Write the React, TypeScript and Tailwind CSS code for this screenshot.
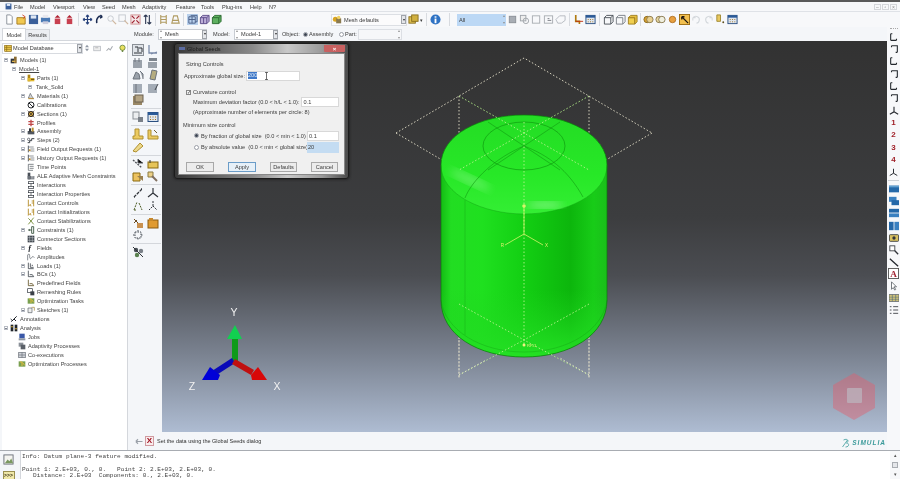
import React from "react";

const Y = "#d9a520", B = "#4a6fa5", G = "#6d7682", K = "#30343a", R = "#b8202a";
const glyphs: Record<string, React.ReactNode> = {
  doc: <path d="M3 1h4l2 2v8H3z" fill="#fff" stroke="#8a8f98" />,
  open: <><path d="M1 4h9v7H1z" fill="#f0c850" stroke="#a67c20" /><path d="M7 1l3 2-2 2" fill="none" stroke="#d04020" /></>,
  save: <><rect x="1" y="1" width="10" height="10" fill="#3a5f9a" /><rect x="3" y="1.5" width="6" height="3.5" fill="#dfe8f5" /></>,
  print: <><rect x="1" y="4" width="10" height="5" fill="#4a7ab5" /><rect x="3" y="1" width="6" height="3" fill="#e8e8ee" /><rect x="3" y="8" width="6" height="3" fill="#ccd" /></>,
  redu: <><path d="M6 1l3 3H3z" fill="#b02030" /><rect x="3" y="5" width="6" height="6" fill="#c84050" /></>,
  move: <path d="M6 1v10M1 6h10M6 1L4.5 3M6 1l1.5 2M6 11L4.5 9M6 11l1.5-2M1 6l2-1.5M1 6l2 1.5M11 6L9 4.5M11 6L9 7.5" stroke="#26407a" strokeWidth="1.3" fill="none" />,
  rot: <path d="M9 3C6 1 2 4 3 10M9 3L7 1M9 3L6.500 4.500" stroke="#1a2a50" strokeWidth="1.6" fill="none" />,
  zoom: <><circle cx="5" cy="5" r="3" fill="none" stroke="#c4c8ce" /><path d="M7 7l4 4" stroke="#d0b8a0" strokeWidth="1.4" /></>,
  zbox: <><rect x="1" y="1" width="7" height="7" fill="none" stroke="#c4c8ce" /><path d="M7 7l4 4" stroke="#d0b8a0" strokeWidth="1.4" /></>,
  fit: <><rect x="1" y="1" width="10" height="10" fill="#f4e8e8" stroke="#d09090" /><path d="M2 2l3 3M10 2L7 5M2 10l3-3M10 10L7 7" stroke="#a02030" strokeWidth="1.3" /></>,
  sort: <path d="M4 1v10M4 1L2 3M4 1l2 2M8 1v10M8 11L6 9M8 11l2-2" stroke="#2a3550" strokeWidth="1.2" fill="none" />,
  h1: <path d="M3 1v10M9 1v10M3 3h6M3 6h6M3 9h6" stroke="#b09a60" strokeWidth="1.2" fill="none" />,
  h2: <path d="M4 2h4l2 8H2zM3 7h6" stroke="#b09a60" strokeWidth="1.2" fill="none" />,
  gridsel: <><rect width="12" height="12" fill="#b8d0ec" /><path d="M2 3h7v7H2zM4 1.500h7v7H9M2 6h7M5.500 3v7" fill="none" stroke="#4a5f88" /></>,
  cube2: <><path d="M1.500 4L4 1.500h7V8L8.500 10.500h-7z" fill="#bcaed8" stroke="#5a4a88" /><path d="M1.500 4h7v6.500M8.500 4L11 1.500M5 4v6.500" fill="none" stroke="#5a4a88" /></>,
  cube3: <><path d="M1.500 4L4 1.500h7V8L8.500 10.500h-7z" fill="#5eb060" stroke="#2a6a30" /><path d="M1.500 4h7v6.500M8.500 4L11 1.500" fill="none" stroke="#2a6a30" /></>,
  mesh: <><circle cx="4" cy="5" r="3" fill="#d9a520" /><rect x="5" y="4" width="6" height="6" fill="#8a7a50" /><circle cx="8" cy="3" r="2" fill="#f0d060" /></>,
  cubes: <><rect x="1" y="3" width="7" height="7" fill="#e0c050" stroke="#8a7020" /><rect x="4" y="1" width="7" height="7" fill="#d0b040" stroke="#8a7020" /></>,
  info: <><circle cx="6" cy="6" r="5.500" fill="#2f73c4" /><rect x="5" y="5" width="2" height="5" fill="#fff" /><rect x="5" y="2.500" width="2" height="1.500" fill="#fff" /></>,
  gbox: <rect x="2.500" y="2.500" width="7" height="7" fill="#a8adb4" stroke="#8a8f96" />,
  gpair: <><rect x="1.500" y="1.500" width="6" height="6" fill="#eee" stroke="#a0a4aa" /><circle cx="7.500" cy="7.500" r="3" fill="none" stroke="#a0a4aa" /></>,
  gsq: <rect x="1.500" y="2" width="8" height="8" fill="none" stroke="#a8acb2" />,
  gsq2: <><rect x="1.500" y="2" width="9" height="8" fill="none" stroke="#a8acb2" /><path d="M5 5h2M5 7h4" stroke="#7a7e84" /></>,
  gtri: <path d="M1 6l4-4h6v5l-4 3H3z" fill="none" stroke="#b4b8be" />,
  axes: <><path d="M3 1v7h4v3" fill="none" stroke="#b07a10" strokeWidth="1.800" /><path d="M3 8h8" stroke="#c03010" strokeWidth="1" /></>,
  table: <><rect x="1" y="1.500" width="10" height="9" fill="#dfe6ee" stroke="#2a4f80" /><rect x="1" y="1.500" width="10" height="2.500" fill="#2a5a98" /><path d="M3 6h1M5.500 6h1M8 6h1M3 8.500h1M5.500 8.500h1M8 8.500h1" stroke="#a07020" /></>,
  boxa: <><path d="M1.500 4h7v7h-7zM1.500 4L4 1.500h7v7L8.500 11M8.500 4L11 1.500" fill="none" stroke="#4a5058" /></>,
  boxb: <><path d="M1.500 4h7v7h-7zM1.500 4L4 1.500h7v7L8.500 11" fill="none" stroke="#787e86" /></>,
  boxy: <><path d="M1.500 4h7v7h-7z" fill="#f0cf50" stroke="#a08020" /><path d="M1.500 4L4 1.500h7v7L8.500 11V4z" fill="#e8c040" stroke="#a08020" /></>,
  ring1: <><circle cx="4.500" cy="6" r="3.500" fill="#d8a030" stroke="#8a6a20" /><circle cx="7.500" cy="6" r="3.500" fill="#e8d090" stroke="#8a7a50" /></>,
  ring2: <><circle cx="4.500" cy="6" r="3.500" fill="#e8d8a0" stroke="#8a7a50" /><circle cx="7.500" cy="6" r="3.500" fill="#f0f0e0" stroke="#8a7a50" /></>,
  ball: <circle cx="6" cy="6" r="3.500" fill="#e8a040" stroke="#b07020" />,
  pick: <><rect x="0.500" y="0.500" width="11" height="11" fill="#f2c050" stroke="#9a6a10" /><path d="M3 3l7 7M3 3v3M3 3h3" stroke="#201810" strokeWidth="1.400" fill="none" /></>,
  undo: <path d="M2 4c3-3 8-1 7 3-.5 2-2 3-3 3M2 4v3M2 4h3" fill="none" stroke="#d4d8dc" strokeWidth="1.200" />,
  redo: <path d="M10 4C7 1 2 3 3 7c.5 2 2 3 3 3M10 4v3M10 4H7" fill="none" stroke="#d4d8dc" strokeWidth="1.200" />,
  yellowdots: <><path d="M2 1h4v7H2z" fill="#e8c860" stroke="#a08830" /><circle cx="9" cy="9" r="1" fill="#605020" /></>,
  dbcyl: <><rect x="1" y="2" width="10" height="9" fill="#f0cc50" stroke="#8a6a10" /><path d="M1 5h10M1 8h10M4 2v9" stroke="#8a6a10" /></>,
  up: <path d="M6 1L3 5h6zM6 11L3 7h6z" fill="#9098a4" />,
  filt: <><rect x="1" y="3" width="9" height="6" fill="#eee" stroke="#b4b8be" /><path d="M3 5h4" stroke="#aaa" /></>,
  flow: <path d="M2 9l3-3 2 2 3-5" stroke="#a4a8ae" strokeWidth="1.400" fill="none" />,
  bulb: <><circle cx="6" cy="5" r="3.500" fill="#e8e060" stroke="#5a7a30" /><rect x="5" y="8.500" width="2" height="2" fill="#5a7a30" /></>,
  models: <><rect x="1" y="4" width="5" height="7" fill={K} /><rect x="6" y="1" width="4" height="10" fill="#8a6a30" /><rect x="3" y="7" width="5" height="2" fill="#d8b050" /></>,
  parts: <><rect x="1" y="1" width="4" height="10" fill="#b08818" /><rect x="1" y="6" width="10" height="5" fill="#e0b830" /><rect x="6" y="7" width="5" height="2" fill="#7a5a10" /></>,
  mat: <><path d="M2 9l3-7 2 4 3 4z" fill="#d8d8d8" stroke="#5a6068" /><path d="M2 10h8" stroke="#c09030" strokeWidth="1.500" /></>,
  cal: <><circle cx="6" cy="6" r="4.500" fill="#fff" stroke="#25282c" strokeWidth="1.500" /><path d="M3 3l6 6" stroke="#25282c" strokeWidth="1.500" /></>,
  sec: <><circle cx="6" cy="6" r="4" fill="#c9a040" stroke="#3a3028" strokeWidth="1.500" /><path d="M1 1l10 10M11 1L1 11" stroke="#3a3028" /></>,
  prof: <path d="M6 1v10M2 4h8M2 8h8" stroke="#c04848" strokeWidth="2" fill="none" />,
  asm: <><rect x="1" y="6" width="10" height="5" fill="#50565e" /><rect x="3" y="2" width="3" height="5" fill="#30343a" /><rect x="7" y="1" width="3" height="6" fill="#b89030" /></>,
  steps: <><path d="M1 10h3V7h3V4h4" stroke="#3a4048" strokeWidth="1.500" fill="none" /><circle cx="2.500" cy="5" r="1.800" fill="none" stroke="#3a4048" /></>,
  fo: <><path d="M2 1v10" stroke="#5a6068" strokeWidth="1.500" /><path d="M2 3h8M5 6h6M5 9h6" stroke="#5a6068" /><circle cx="4" cy="8" r="1.500" fill="#c09030" /></>,
  time: <path d="M2 2h8M2 2v9h7M4 5h6M4 8h6" stroke="#4a5058" fill="none" />,
  ale: <><rect x="1" y="1" width="4" height="10" fill="#4a5058" /><rect x="1" y="6" width="10" height="5" fill="#6a7078" /><path d="M6 7h4M6 9h4" stroke="#ddd" /></>,
  inter: <><rect x="2" y="1" width="8" height="3" fill="#fff" stroke="#2a3038" /><rect x="2" y="8" width="8" height="3" fill="#fff" stroke="#2a3038" /><path d="M6 4v4" stroke="#2a3038" /></>,
  cc: <path d="M2 1v10l3-3 1 3M10 1v10M7 3h3M7 6h3" stroke="#b89030" strokeWidth="1.400" fill="none" />,
  cs: <path d="M2 2l4 4-4 5M10 1L6 6l4 5" stroke="#7a9040" strokeWidth="1.400" fill="none" />,
  con: <><path d="M7 1h3v10H7zM2 6h5" stroke="#35503a" strokeWidth="1.300" fill="none" /><path d="M2 6l2-2v4z" fill="#35503a" /></>,
  conn: <><rect x="1" y="1" width="10" height="10" fill="#40464e" /><path d="M1 4h10M1 8h10M4 1v10M8 1v10" stroke="#d4d8dc" strokeWidth="0.700" /></>,
  field: <text x="2" y="11" fontSize="12" fontStyle="italic" fontWeight="700" fontFamily="Liberation Serif" fill="#20242a">f</text>,
  amp: <path d="M1 11V3c2-3 3-1 3 2s1 5 3 2 2-2 4 0" fill="none" stroke="#5a6068" strokeWidth="1.100" />,
  load: <path d="M2 1v9h8M5 2v6h5M7 5h2" stroke="#3a4048" fill="none" strokeWidth="1.200" />,
  bc: <path d="M2 1v9h8l-2-3H4" stroke="#3a4048" fill="none" strokeWidth="1.200" />,
  pre: <path d="M2 1v9h8l-2-3H4" stroke="#6a5a30" fill="none" strokeWidth="1.300" />,
  rem: <><rect x="1" y="1" width="7" height="6" fill="#fff" stroke="#2a3038" /><rect x="5" y="5" width="6" height="6" fill="#3a4048" /></>,
  opt: <><rect x="1" y="2" width="10" height="8" fill="#7aa050" /><path d="M3 3h3v6M7 4l3 4" stroke="#e8c040" strokeWidth="1.400" fill="none" /></>,
  sketch: <><path d="M1.500 3h6v7h-6z" fill="#eee" stroke="#5a6068" /><path d="M7 2h4v5" stroke="#a08030" fill="none" /></>,
  ann: <path d="M2 10l4-4M6 6l4-4M6 6l3 3M1 6l2 2" stroke="#20242a" strokeWidth="1.500" fill="none" />,
  ana: <><rect x="1" y="1" width="4" height="10" fill="#20242a" /><rect x="7" y="1" width="4" height="10" fill="#20242a" /><rect x="2" y="3" width="2" height="2" fill="#e0b030" /><rect x="8" y="6" width="2" height="2" fill="#e0b030" /></>,
  job: <><rect x="2" y="1" width="8" height="7" fill="#3a58a8" /><rect x="1" y="8" width="10" height="3" fill="#9098a4" /></>,
  ada: <><rect x="1" y="1" width="7" height="6" fill="#8a9098" /><rect x="4" y="4" width="7" height="7" fill="#5a6068" /></>,
  coex: <><rect x="1" y="2" width="10" height="8" fill="#cfd3d8" stroke="#6a7078" /><path d="M6 2v8M1 6h10" stroke="#6a7078" /></>,
  t1: <><rect x="0.500" y="0.500" width="11" height="11" fill="#dfe3e8" stroke="#8a8f96" /><path d="M2 9h8M3 3h3v5M7 4h3v4" stroke="#30343a" fill="none" /></>,
  t2: <path d="M2 1v8h8M4 10l6-2" stroke="#7a8aa8" strokeWidth="1.300" fill="none" />,
  t3: <><rect x="1" y="3" width="9" height="8" fill="#9aa1aa" /><path d="M3 1v4M7 1v4" stroke="#6c737c" /></>,
  t4: <><rect x="1" y="5" width="9" height="6" fill="#9aa1aa" /><rect x="2" y="1" width="8" height="3" fill="#7d848d" /></>,
  t5: <path d="M1 10l3-7 3 2 1 5zM8 2l3 3v5" fill="#9aa1aa" stroke="#6c737c" />,
  t6: <path d="M5 1l5 1-2 9-5-1z" fill="#b4ac80" stroke="#6c737c" />,
  t7: <><rect x="1" y="2" width="9" height="9" fill="#a4acb6" /><path d="M4 2v9" stroke="#6c737c" /></>,
  t8: <><rect x="1" y="2" width="9" height="9" fill="#a4acb6" /><path d="M8 8l3-6" stroke="#40444a" /></>,
  t9: <><rect x="1" y="2" width="9" height="9" fill="#9a8866" /><rect x="3" y="1" width="8" height="7" fill="#b4a484" stroke="#6a6050" /></>,
  t10: <><rect x="1" y="1" width="6" height="7" fill="#eceef0" stroke="#8a8f96" /><rect x="6" y="6" width="5" height="5" fill="#7a8088" /></>,
  y1: <><path d="M3 1h4v7h4v3H1V8h2z" fill="#eccb62" stroke="#b09030" /></>,
  y2: <><path d="M1 2h3v6h7v3H1z" fill="#eccb62" stroke="#b09030" /><path d="M7 2l3 3" stroke="#706030" /></>,
  y3: <><path d="M1 10l7-8 3 3-7 6z" fill="#ecd88a" stroke="#b09030" /></>,
  m1: <><path d="M1 2l9 8" stroke="#50545a" strokeWidth="1.400" strokeDasharray="2 1" /><path d="M6 1v4h5" stroke="#50545a" /></>,
  m2: <><rect x="1" y="4" width="10" height="6" fill="#e6c458" stroke="#8a6a10" /><path d="M3 2v3" stroke="#30343a" /></>,
  m3: <><path d="M1 3h7v8H1z" fill="#ecc260" stroke="#8a6a10" /><path d="M5 6h6v5" fill="#9a8050" /></>,
  m4: <><path d="M1 2h5v5H1z" fill="#ecd088" stroke="#8a7a40" /><path d="M5 6l5 5" stroke="#807060" strokeWidth="2" /></>,
  d1: <path d="M2 10l8-8M2 10h1M10 2h-1" stroke="#30343a" strokeWidth="1.300" strokeDasharray="3 1" />,
  d2: <path d="M6 1v5L1 10M6 6l5 4" stroke="#30343a" strokeWidth="1.200" fill="none" />,
  d3: <path d="M2 10l3-8M7 3l3 7M2 10l2 0" stroke="#50602a" strokeDasharray="2 1" fill="none" />,
  d4: <path d="M6 1v5L2 10M6 6l4 4" stroke="#30343a" strokeDasharray="2 1" fill="none" />,
  e1: <><path d="M2 2l4 4M2 6l3-3" stroke="#6a4a20" /><rect x="5" y="6" width="6" height="5" fill="#c89050" /></>,
  e2: <><rect x="1" y="3" width="10" height="8" fill="#e09a30" stroke="#8a5a10" /><rect x="2" y="1" width="4" height="3" fill="#c8882a" /></>,
  e3: <path d="M3 3h6v6H3zM1 6h2M9 6h2M6 1v2M6 9v2" fill="none" stroke="#4a5058" strokeDasharray="1.500 1" />,
  e4: <><circle cx="4" cy="4" r="2.200" fill="#4a5058" /><circle cx="9" cy="5" r="2.200" fill="#7a8088" /><circle cx="5" cy="9" r="2.200" fill="#5a8050" /><path d="M1 1l10 10" stroke="#30343a" /></>,
  cs1: <path d="M2 2v8M2 2h2M2 10h7M9 10V8" stroke="#24282e" strokeWidth="1.300" fill="none" />,
  cs2: <path d="M3 2h7v8M10 10H8M3 2v2" stroke="#24282e" strokeWidth="1.300" fill="none" />,
  tri: <path d="M6 1v6L1 10M6 7l5 3" stroke="#24282e" strokeWidth="1.300" fill="none" />,
  tri2: <path d="M6 2v5L2 10M6 7l4 3" stroke="#5a6068" strokeWidth="1.200" fill="none" strokeDasharray="2 .7" />,
  bar1: <><rect x="0" y="2" width="12" height="8" fill="#2468a8" /><rect x="0" y="2" width="12" height="2" fill="#60a0d0" /></>,
  bar2: <><rect x="0" y="1" width="9" height="6" fill="#3a80c0" /><rect x="3" y="5" width="9" height="6" fill="#2468a8" /></>,
  bar3: <><rect x="0" y="1" width="12" height="4.500" fill="#2468a8" /><rect x="0" y="6.500" width="12" height="4.500" fill="#3a80c0" /></>,
  bar4: <><rect x="0" y="1" width="5.500" height="10" fill="#2468a8" /><rect x="6.500" y="1" width="5.500" height="10" fill="#3a80c0" /></>,
  cam: <><rect x="0.500" y="2" width="11" height="8" rx="1" fill="#d8c060" stroke="#30343a" /><circle cx="6" cy="6" r="2" fill="#30343a" /></>,
  zm: <><rect x="1" y="1" width="6" height="6" fill="#fff" stroke="#30343a" /><path d="M7 7l4 4" stroke="#30343a" strokeWidth="1.600" /></>,
  line: <path d="M1 2l10 9" stroke="#20242a" strokeWidth="1.500" />,
  tA: <><rect x="0.500" y="0.500" width="11" height="11" fill="#fff" stroke="#555" /><text x="6" y="10" textAnchor="middle" fontSize="10" fontWeight="700" fontFamily="Liberation Serif" fill="#a02030">A</text></>,
  arrow: <path d="M3 1v9l2-2 2 3 1-1-2-3h3z" fill="#fff" stroke="#5a6068" />,
  tb: <><rect x="0" y="2" width="12" height="8" fill="#d8c878" stroke="#5a6068" /><path d="M0 5h12M0 7.500h12M4 2v8M8 2v8" stroke="#3a5a7a" strokeWidth=".6" /></>,
  dash: <path d="M1 2h2M5 2h6M1 6h2M5 6h6M1 10h2M5 10h6" stroke="#30343a" />,
  prev: <path d="M1 6h9M1 6l3-3M1 6l3 3" stroke="#9aa0a8" strokeWidth="1.500" fill="none" />,
  msg: <><rect x="1" y="1" width="10" height="10" fill="#f4f4f0" stroke="#6a7078" /><path d="M2 10l3-4 2 2 2-3 2 5z" fill="#7a9860" /></>,
};

function Ic({ k, s = 11 }: { k: string; s?: number }) {
  return (
    <svg width={s} height={s} viewBox="0 0 12 12" className="block shrink-0">
      {glyphs[k]}
    </svg>
  );
}

function Cell({ k }: { k: string }) {
  return (
    <div className="w-[12px] h-full flex items-center justify-center shrink-0">
      <Ic k={k} s={11} />
    </div>
  );
}

function Sep({ w }: { w: string }) {
  return (
    <div className={`${w} h-full flex justify-center shrink-0 py-[1px]`}>
      <div className="w-px h-full bg-[#d8dbe0]" />
    </div>
  );
}

const menu: [string, string][] = [
  ["File", "w-[16px]"], ["Model", "w-[23px]"], ["Viewport", "w-[30px]"], ["View", "w-[19px]"],
  ["Seed", "w-[20px]"], ["Mesh", "w-[20px]"], ["Adaptivity", "w-[34px]"], ["Feature", "w-[25px]"],
  ["Tools", "w-[21px]"], ["Plug-ins", "w-[28px]"], ["Help", "w-[19px]"], ["N?", "w-[12px]"],
];

type Row = { t: string; lv: number; e?: boolean; i?: string; u?: boolean };
const tree: Row[] = [
  { t: "Models (1)", lv: 0, e: true, i: "models" },
  { t: "Model-1", lv: 1, e: true, u: true },
  { t: "Parts (1)", lv: 2, e: true, i: "parts" },
  { t: "Tank_Solid", lv: 4, e: true },
  { t: "Materials (1)", lv: 2, e: true, i: "mat" },
  { t: "Calibrations", lv: 2, i: "cal" },
  { t: "Sections (1)", lv: 2, e: true, i: "sec" },
  { t: "Profiles", lv: 2, i: "prof" },
  { t: "Assembly", lv: 2, e: true, i: "asm" },
  { t: "Steps (2)", lv: 2, e: true, i: "steps" },
  { t: "Field Output Requests (1)", lv: 2, e: true, i: "fo" },
  { t: "History Output Requests (1)", lv: 2, e: true, i: "fo" },
  { t: "Time Points", lv: 2, i: "time" },
  { t: "ALE Adaptive Mesh Constraints", lv: 2, i: "ale" },
  { t: "Interactions", lv: 2, i: "inter" },
  { t: "Interaction Properties", lv: 2, i: "inter" },
  { t: "Contact Controls", lv: 2, i: "cc" },
  { t: "Contact Initializations", lv: 2, i: "cc" },
  { t: "Contact Stabilizations", lv: 2, i: "cs" },
  { t: "Constraints (1)", lv: 2, e: true, i: "con" },
  { t: "Connector Sections", lv: 2, i: "conn" },
  { t: "Fields", lv: 2, e: true, i: "field" },
  { t: "Amplitudes", lv: 2, i: "amp" },
  { t: "Loads (1)", lv: 2, e: true, i: "load" },
  { t: "BCs (1)", lv: 2, e: true, i: "bc" },
  { t: "Predefined Fields", lv: 2, i: "pre" },
  { t: "Remeshing Rules", lv: 2, i: "rem" },
  { t: "Optimization Tasks", lv: 2, i: "opt" },
  { t: "Sketches (1)", lv: 2, e: true, i: "sketch" },
  { t: "Annotations", lv: 0, i: "ann" },
  { t: "Analysis", lv: 0, e: true, i: "ana" },
  { t: "Jobs", lv: 3, i: "job" },
  { t: "Adaptivity Processes", lv: 3, i: "ada" },
  { t: "Co-executions", lv: 3, i: "coex" },
  { t: "Optimization Processes", lv: 3, i: "opt" },
];
const pads = ["pl-[3px]", "pl-[11px]", "pl-[20px]", "pl-[11px]", "pl-[27px]"];

function Exp({ show }: { show: boolean }) {
  return (
    <div className="w-[5px] h-[5px] shrink-0 flex items-center justify-center">
      {show && (
        <div className="w-[4px] h-[4px] border border-[#b8bcc4] bg-white flex items-center justify-center">
          <div className="w-[2px] h-px bg-[#808590]" />
        </div>
      )}
    </div>
  );
}

function TreeRow({ r }: { r: Row }) {
  return (
    <div className={`flex items-center h-[8.94px] ${pads[r.lv]}`}>
      <Exp show={!!r.e} />
      {r.i ? (
        <div className="w-[11px] flex justify-center shrink-0"><Ic k={r.i} s={8} /></div>
      ) : r.lv === 1 ? (
        <div className="w-[2px]" />
      ) : (
        <div className="w-[3px]" />
      )}
      <span className={`ml-[1px] whitespace-nowrap ${r.u ? "underline" : ""}`}>{r.t}</span>
    </div>
  );
}

function Spin() {
  return (
    <div className="w-[4px] h-[9px] flex flex-col justify-between items-center shrink-0">
      <div className="w-0 h-0 border-x-[1.5px] border-x-transparent border-b-[2px] border-b-[#909090]" />
      <div className="w-0 h-0 border-x-[1.5px] border-x-transparent border-t-[2px] border-t-[#909090]" />
    </div>
  );
}

function Drop() {
  return (
    <div className="w-[5px] h-[9px] bg-[#e4e6ea] border border-[#a0a4aa] flex items-center justify-center shrink-0">
      <div className="w-0 h-0 border-x-[1.5px] border-x-transparent border-t-[2px] border-t-[#303030]" />
    </div>
  );
}

function Combo({ w, t, spin = false }: { w: string; t: string; spin?: boolean }) {
  return (
    <div className={`${w} h-[11px] flex items-center bg-white border-y border-l border-[#c8ccd2] shrink-0`}>
      {spin && <Spin />}
      <span className="flex-1 pl-[2px] whitespace-nowrap overflow-hidden">{t}</span>
      <Drop />
    </div>
  );
}

function Radio({ on = false }: { on?: boolean }) {
  return (
    <div className="w-[5px] h-[5px] rounded-full border border-[#9a9ea6] bg-white flex items-center justify-center shrink-0">
      {on && <div className="w-[3px] h-[3px] rounded-full bg-[#3a4250]" />}
    </div>
  );
}

function Btn({ t, w, focus = false }: { t: string; w: string; focus?: boolean }) {
  return (
    <div className={`${w} h-[10px] flex items-center justify-center border ${focus ? "border-[#6a9cc8] bg-[#e6f0f8]" : "border-[#a8a8a8] bg-[#ececec]"}`}>{t}</div>
  );
}

const rightIcons: [string, string][] = [
  ["cs1", "h-[12px]"], ["cs2", "h-[12px]"], ["cs1", "h-[12px]"], ["cs2", "h-[13px]"], ["cs1", "h-[12px]"], ["cs2", "h-[12px]"], ["tri", "h-[13px]"],
];

function Right() {
  const nums = ["1", "2", "3", "4"];
  const low = ["bar1", "bar2", "bar3", "bar4", "cam", "zm", "line", "tA", "arrow", "tb", "dash"];
  return (
    <div className="w-[13px] h-full bg-[#f7f8fa] flex flex-col items-center shrink-0">
      <div className="w-[8px] h-px mb-[2px] mt-px border-t border-dotted border-[#a8a8a8]" />
      {rightIcons.map(([k, h], i) => (
        <div key={i} className={`${h} flex items-center justify-center`}><Ic k={k} s={10} /></div>
      ))}
      {nums.map((n) => (
        <div key={n} className="h-[12.3px] flex items-center justify-center text-[8px] leading-none font-bold text-[#a02028]">{n}</div>
      ))}
      <div className="h-[12px] flex items-center"><Ic k="tri" s={9} /></div>
      <div className="w-[11px] h-px bg-[#ccd0d6] my-[2px]" />
      {low.map((k, i) => (
        <div key={i} className="h-[12.100px] flex items-center justify-center"><Ic k={k} s={k === "tA" ? 11 : 10} /></div>
      ))}
    </div>
  );
}

function Tool({ a, b }: { a: string; b?: string }) {
  return (
    <div className="flex gap-[3px] pl-[2px] h-[12.500px] items-center">
      <Ic k={a} s={12} />
      {b ? <Ic k={b} s={12} /> : <div className="w-[12px]" />}
    </div>
  );
}
function ToolSep() {
  return <div className="h-px bg-[#d4d7dc] mx-[1px] my-[1.750px]" />;
}

function Scene() {
  const dash = "M396 133 L524 58 L652 133 M396 133 L459 170 M652 133 L589 170 M459 96 V378 M589 96 V378";
  const dashOn = "M524 122 V345 M459 96 L524 133 L589 170 M589 96 L524 133 L459 170 M459 304 L524 340 L589 375 M589 304 L524 340 L459 375";
  return (
    <svg className="absolute inset-0 w-full h-full" viewBox="162 41 725 391">
      <defs>
        <linearGradient id="body" x1="0" x2="1" y1="0" y2="0">
          <stop offset="0" stopColor="#14bc14" />
          <stop offset="0.06" stopColor="#22dd22" />
          <stop offset="0.25" stopColor="#1fe01f" />
          <stop offset="0.5" stopColor="#13cf13" />
          <stop offset="0.78" stopColor="#0cb60c" />
          <stop offset="0.92" stopColor="#18cc18" />
          <stop offset="1" stopColor="#1abf1a" />
        </linearGradient>
        <linearGradient id="dome" x1="0" x2="0" y1="0" y2="1">
          <stop offset="0" stopColor="#24dc24" />
          <stop offset="0.6" stopColor="#27e827" />
          <stop offset="1" stopColor="#34ee34" />
        </linearGradient>
        <linearGradient id="bottom" x1="0" x2="0" y1="0" y2="1">
          <stop offset="0" stopColor="#1ed41e" stopOpacity="0" />
          <stop offset="1" stopColor="#24e024" />
        </linearGradient>
        <filter id="soft"><feGaussianBlur stdDeviation="4" /></filter>
      </defs>
      <path d={dash} fill="none" stroke="#e6e2cc" strokeWidth="0.900" strokeDasharray="1.500 2" />
      <path d="M441 165 C441 135 480 115 524 115 C568 115 607 135 607 165 L607 300 C607 335 570 357 524 357 C478 357 441 335 441 300 Z" fill="url(#body)" />
      <path d="M441 290 H607 V300 C607 335 570 357 524 357 C478 357 441 335 441 300 Z" fill="url(#bottom)" />
      <path d="M441 165 C441 135 480 115 524 115 C568 115 607 135 607 165 C607 195 565 214 524 214 C483 214 441 195 441 165 Z" fill="url(#dome)" />
      <path d="M441 165 C441 195 483 214 524 214 C565 214 607 195 607 165" fill="none" stroke="#12a812" strokeWidth="0.500" />
      <ellipse cx="470" cy="180" rx="22" ry="5" fill="#8cf88c" opacity="0.500" filter="url(#soft)" transform="rotate(25 470 180)" />
      <ellipse cx="545" cy="205" rx="18" ry="3" fill="#a8faa8" opacity="0.700" filter="url(#soft)" />
      <ellipse cx="524" cy="146" rx="41" ry="24" fill="none" stroke="#109c10" strokeWidth="0.700" />
      <path d="M465 198 C472 180 495 158 524 146 C548 155 568 170 583 197 M488 122 L560 170 M560 122 L488 170" fill="none" stroke="#109c10" strokeWidth="0.600" />
      <path d="M465 200 V335 M441 300 C445 330 480 352 524 352 C568 352 603 330 607 300" fill="none" stroke="#109c10" strokeWidth="0.500" opacity="0.700" />
      <path d="M441 165 C441 135 480 115 524 115 C568 115 607 135 607 165 L607 300 C607 335 570 357 524 357 C478 357 441 335 441 300 Z" fill="none" stroke="#0c7a0c" strokeWidth="0.700" />
      <path d={dashOn} fill="none" stroke="#b6f28a" strokeWidth="0.900" strokeDasharray="1.500 2" />
      <path d="M459 340 V378 M589 340 V378 M459 375 L486 360 M589 375 L560 358" fill="none" stroke="#e6e2cc" strokeWidth="0.900" strokeDasharray="1.500 2" />
      <path d="M524 206 V234 L505 245 M524 234 L543 245" fill="none" stroke="#d6f56a" strokeWidth="0.800" />
      <circle cx="524" cy="206" r="1.800" fill="#d6f56a" />
      <circle cx="524" cy="345" r="1.500" fill="#f0f080" />
      <text x="504" y="247" fontSize="4.500" fill="#e0f070" textAnchor="end" fontFamily="Liberation Sans">R</text>
      <text x="545" y="247" fontSize="4.500" fill="#e0f070" fontFamily="Liberation Sans">X</text>
      <text x="527" y="347" fontSize="4" fill="#e8f080" fontFamily="Liberation Sans">RP-1</text>
      {/* triad */}
      <path d="M232 362 V338 H238 V362 Z" fill="#0f9a1a" />
      <path d="M235 325 L242 339 H227 Z" fill="#12d050" />
      <path d="M232 358 L212 371 L215 376 L235 363 Z" fill="#0a0ab8" />
      <path d="M202 380 L210 367 L220 375 L218 380 Z" fill="#0000d8" />
      <path d="M235 359 L254 370 L251 375 L232 364 Z" fill="#c01010" />
      <path d="M267 380 L258 367 L251 375 L252 380 Z" fill="#d80808" />
      <text x="234" y="316" fontSize="10.500" textAnchor="middle" fill="#f2f2f2" fontFamily="Liberation Sans">Y</text>
      <text x="192" y="390" fontSize="10.500" textAnchor="middle" fill="#f2f2f2" fontFamily="Liberation Sans">Z</text>
      <text x="277" y="390" fontSize="10.500" textAnchor="middle" fill="#f2f2f2" fontFamily="Liberation Sans">X</text>
      {/* watermark */}
      <path d="M854 373 L875 385 V408 L854 420 L833 408 V385 Z" fill="#e0606e" opacity="0.450" />
      <rect x="847" y="388" width="15" height="15" rx="1" fill="#bcb0ba" opacity="0.800" />
    </svg>
  );
}

function Dialog() {
  return (
    <div className="absolute left-[12px] top-[2px] w-[175px] h-[136px] rounded-[3px] flex flex-col bg-[linear-gradient(90deg,#3a3a3a,#8a8a8a_45%,#c8c8c8_65%,#9a9a9a_85%,#4a4a4a)] px-[3px] pb-[3px] shadow-[0_0_3px_#111] border border-[#1c1c1c] text-[#3c3c3c]">
      <div className="h-[9px] flex items-center justify-between shrink-0">
        <div className="flex items-center gap-[2px] pl-[1px]">
          <div className="w-[6px] h-[3px] bg-[#5a6aa0]" />
          <span className="text-[#1c1c1c]">Global Seeds</span>
        </div>
        <div className="w-[21px] h-[7px] bg-[#c86060] rounded-b-[1px] flex items-center justify-center text-white text-[6px] leading-none font-bold">×</div>
      </div>
      <div className="flex-1 bg-[#f0f0f0] flex flex-col pl-[4px] pr-[5px] pt-[5px] border border-[#888]">
        <div className="h-[9px] pl-[3px] flex items-center">Sizing Controls</div>
        <div className="h-[13px] mt-[1px] flex items-center">
          <span className="w-[63px] pl-[1px] whitespace-nowrap">Approximate global size:</span>
          <div className="w-[54px] h-[10px] bg-white border border-[#d8d8d8] flex items-center pl-[1px] relative">
            <span className="bg-[#3f78c8] text-[#dde8f4] leading-[7px]">200</span>
            <svg width="5" height="8" viewBox="0 0 5 8" className="absolute left-[17px] top-0"><path d="M1 .5h3M2.500.5v7M1 7.500h3" stroke="#333" strokeWidth=".7" /></svg>
          </div>
        </div>
        <div className="h-[10px] mt-[5px] flex items-center gap-[2px] pl-[3px]">
          <div className="w-[5px] h-[5px] border border-[#888] bg-[#f8f8f8] flex items-center justify-center text-[5px] leading-none text-[#333]">✓</div>
          <span>Curvature control</span>
        </div>
        <div className="h-[10px] flex items-center pl-[10px]">
          <span className="w-[110px] whitespace-nowrap">Maximum deviation factor (0.0 &lt; h/L &lt; 1.0):</span>
          <div className="w-[38px] h-[10px] bg-white border border-[#d8d8d8] pl-[1px] flex items-center">0.1</div>
        </div>
        <div className="h-[9px] flex items-center pl-[10px] whitespace-nowrap">(Approximate number of elements per circle: 8)</div>
        <div className="h-[9px] mt-[4px] flex items-center whitespace-nowrap">Minimum size control</div>
        <div className="h-[11px] mt-[1px] flex items-center pl-[11px]">
          <Radio on />
          <span className="w-[108px] pl-[2px] whitespace-nowrap">By fraction of global size &nbsp;(0.0 &lt; min &lt; 1.0)</span>
          <div className="w-[32px] h-[10px] bg-white border border-[#d8d8d8] pl-[1px] flex items-center">0.1</div>
        </div>
        <div className="h-[12px] flex items-center pl-[11px]">
          <Radio />
          <span className="w-[108px] pl-[2px] whitespace-nowrap">By absolute value &nbsp;(0.0 &lt; min &lt; global size)</span>
          <div className="w-[32px] h-[11px] bg-[#c4dcf2] pl-[1px] flex items-center">20</div>
        </div>
        <div className="mt-[9px] flex justify-between pl-[3px] pr-[1px]">
          <Btn t="OK" w="w-[28px]" />
          <Btn t="Apply" w="w-[28px]" focus />
          <Btn t="Defaults" w="w-[27px]" />
          <Btn t="Cancel" w="w-[27px]" />
        </div>
      </div>
    </div>
  );
}

const tools: (string[] | string)[] = [
  ["t1", "t2"], ["t3", "t4"], ["t5", "t6"], ["t7", "t8"], ["t9"], "s",
  ["t10", "table"], "s", ["y1", "y2"], ["y3"], "s", ["m1", "m2"], ["m3", "m4"], "s",
  ["d1", "d2"], ["d3", "d4"], "s2", ["e1", "e2"], ["e3"], "s", ["e4"],
];

export default function App() {
  return (
    <div className="w-[900px] h-[479px] overflow-hidden flex flex-col bg-[#f4f6f9] text-[#3a3a3a] text-[5.6px] leading-[8px] font-['Liberation_Sans',sans-serif] blur-[0.4px]">
      <div className="h-[2px] bg-[#5a5a5a] shrink-0" />
      <div className="h-[10px] flex items-center shrink-0 border-b border-[#dfe2e7] bg-[#f7f8fa]">
        <div className="w-[14px] flex justify-center pl-[2px]"><Ic k="save" s={7} /></div>
        {menu.map(([t, w]) => (
          <span key={t} className={`${w} whitespace-nowrap`}>{t}</span>
        ))}
        <div className="ml-auto flex gap-[1px] pr-[3px]">
          {["–", "▫", "×"].map((c) => (
            <div key={c} className="w-[7px] h-[6px] border border-[#d4d6da] text-[5px] leading-[4px] text-center text-[#8a8a8a]">{c}</div>
          ))}
        </div>
      </div>
      <div className="h-[15px] flex items-center shrink-0 pl-[3px] bg-[#f7f8fa]">
        {["doc", "open", "save", "print", "redu", "redu"].map((k, i) => <Cell key={i} k={k} />)}
        <Sep w="w-[6px]" />
        {["move", "rot", "zoom", "zbox", "fit", "sort"].map((k, i) => <Cell key={i} k={k} />)}
        <Sep w="w-[4px]" />
        {["h1", "h2"].map((k, i) => <Cell key={i} k={k} />)}
        <Sep w="w-[5px]" />
        {["gridsel", "cube2", "cube3"].map((k, i) => <Cell key={i} k={k} />)}
        <div className="w-[109px] shrink-0" />
        <div className="w-[76px] h-[12px] flex items-center bg-[#fbfbfc] border border-[#dcdfe4] shrink-0">
          <Ic k="mesh" s={10} />
          <span className="flex-1 pl-[2px]">Mesh defaults</span>
          <Drop />
        </div>
        <Cell k="cubes" />
        <div className="w-[5px] text-[5px] text-center">▾</div>
        <Sep w="w-[5px]" />
        <Cell k="info" />
        <Sep w="w-[16px]" />
        <div className="w-[49px] h-[12px] flex items-center bg-[#bcd8f5] shrink-0">
          <span className="flex-1 pl-[2px]">All</span>
          <Spin />
        </div>
        {["gbox", "gpair", "gsq", "gsq2", "gtri"].map((k, i) => <Cell key={i} k={k} />)}
        <Sep w="w-[6px]" />
        {["axes", "table"].map((k, i) => <Cell key={i} k={k} />)}
        <Sep w="w-[6px]" />
        {["boxa", "boxb", "boxy"].map((k, i) => <Cell key={i} k={k} />)}
        <Sep w="w-[4px]" />
        {["ring1", "ring2", "ball", "pick", "undo", "redo", "yellowdots", "table"].map((k, i) => <Cell key={i} k={k} />)}
      </div>

      <div className="flex-1 flex min-h-0">
        <div className="w-[130px] shrink-0 flex flex-col">
          <div className="h-[14px] flex items-end pl-[2px] shrink-0 border-b border-[#d4d7dc]">
            <div className="w-[24px] h-[12px] bg-white border border-b-0 border-[#d4d7dc] flex items-center justify-center">Model</div>
            <div className="w-[24px] h-[11px] bg-[#eceef2] border border-b-0 border-l-0 border-[#d4d7dc] flex items-center justify-center">Results</div>
          </div>
          <div className="flex-1 bg-white border-r border-[#d4d7dc] mr-[2px] ml-[2px] flex flex-col">
            <div className="h-[14.500px] flex items-center shrink-0">
              <div className="w-[81px] h-[11px] flex items-center border border-[#d8dbe0] pl-[1px]">
                <Ic k="dbcyl" s={8} />
                <span className="flex-1 pl-[1px]">Model Database</span>
                <Drop />
              </div>
              <Ic k="up" s={8} />
              <div className="ml-[2px]"><Ic k="filt" s={9} /></div>
              <div className="ml-[3px]"><Ic k="flow" s={9} /></div>
              <div className="ml-[4px]"><Ic k="bulb" s={9} /></div>
            </div>
            <div className="-ml-[2px] text-[#444]">
              {tree.map((r) => <TreeRow key={r.t} r={r} />)}
            </div>
          </div>
        </div>

        <div className="flex-1 min-w-0 flex flex-col">
          <div className="h-[14px] flex items-center shrink-0 pl-[4px]">
            <span className="w-[24px]">Module:</span>
            <Combo w="w-[49px]" t="Mesh" spin />
            <span className="w-[21px] ml-[6px]">Model:</span>
            <Combo w="w-[44px]" t="Model-1" spin />
            <span className="w-[21px] ml-[4px]">Object:</span>
            <Radio on />
            <span className="ml-[1px] w-[30px]">Assembly</span>
            <Radio />
            <span className="ml-[1px] w-[13px]">Part:</span>
            <div className="w-[44px] h-[11px] border border-[#dcdfe4] bg-[#f6f7f9] flex justify-end items-center"><Spin /></div>
          </div>
          <div className="flex-1 flex min-h-0">
            <div className="w-[32px] shrink-0 flex flex-col pt-[3px]">
              {tools.map((t, i) =>
                typeof t === "string" ? (
                  <ToolSep key={i} />
                ) : (
                  <Tool key={i} a={t[0]} b={t[1]} />
                )
              )}
            </div>
            <div className="flex-1 relative bg-[linear-gradient(180deg,#323232_0%,#3c3d3f_45%,#4b4d52_60%,#7a8290_80%,#aebcd2_100%)] overflow-hidden">
              <Scene />
              <Dialog />
            </div>
          </div>
          <div className="h-[18px] flex items-center shrink-0 pl-[5px] bg-[#f4f6f9] text-[5.5px]">
            <Ic k="prev" s={9} />
            <div className="w-[9px] h-[10px] border border-[#d09aa0] bg-[#f8ecec] flex items-center justify-center text-[8px] leading-none text-[#a01020] font-bold ml-[1px]">X</div>
            <span className="ml-[3px] whitespace-nowrap text-[#303030]">Set the data using the Global Seeds dialog</span>
            <div className="ml-auto flex items-center gap-[1px] pr-[1px] pt-[4px]">
              <svg width="10" height="11" viewBox="0 0 9 11"><path d="M2 2c4-2 6 1 3 3 3 0 3 4-1 4M1 9l5-7" fill="none" stroke="#3a9a9a" strokeWidth=".8" /></svg>
              <span className="italic font-bold text-[6.5px] tracking-[1px] text-[#3a9a9a]">SIMULIA</span>
            </div>
          </div>
        </div>
        <Right />
      </div>

      <div className="h-[29px] flex shrink-0 border-t border-[#a8acb2] bg-[#f4f6f9]">
        <div className="w-[20px] shrink-0 flex flex-col items-center pt-[3px] pr-[3px]">
          <Ic k="msg" s={11} />
          <div className="mt-[6px] w-[12px] h-[10px] bg-[#f0e8a8] border border-[#9a9050] text-[5px] leading-[7px] text-center font-bold text-[#302810]">&gt;&gt;&gt;</div>
        </div>
        <div className="flex-1 bg-white font-['Liberation_Mono',monospace] text-[6.1px] leading-[6.6px] pt-[2.500px] pl-[1px] whitespace-pre text-[#444] border-l border-[#d4d7dc]">
          {"Info: Datum plane-3 feature modified.\n\nPoint 1: 2.E+03, 0., 0.   Point 2: 2.E+03, 2.E+03, 0.\n   Distance: 2.E+03  Components: 0., 2.E+03, 0."}
        </div>
        <div className="w-[10px] shrink-0 bg-[#f7f8fa] flex flex-col items-center justify-between py-[2px] text-[5px] leading-none text-[#555]">
          <span>▴</span>
          <div className="w-[6px] h-[6px] border border-[#a8acb2] bg-[#e4e6ea]" />
          <span>▾</span>
        </div>
      </div>
    </div>
  );
}
